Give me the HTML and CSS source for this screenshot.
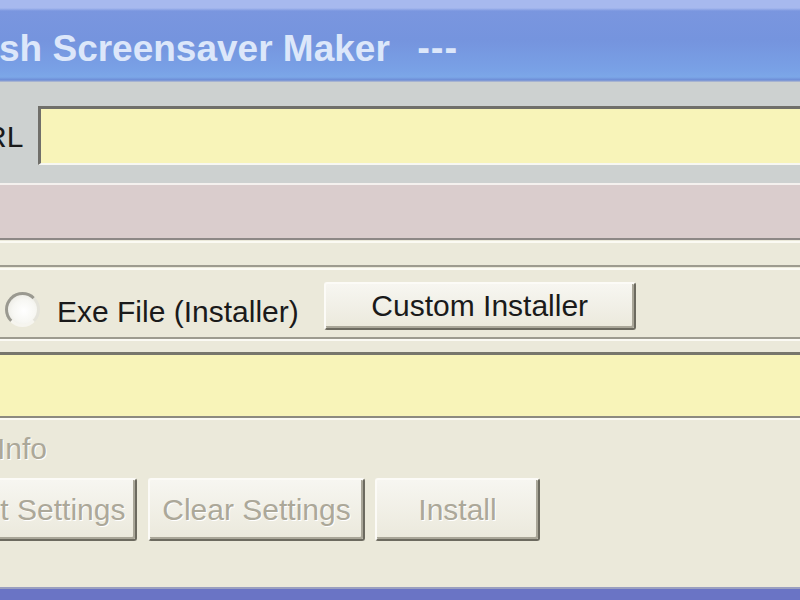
FILE: index.html
```html
<!DOCTYPE html>
<html lang="en">
<head>
    <meta charset="UTF-8">
    <meta name="viewport" content="width=device-width, initial-scale=1.0">
    <title>Flash Screensaver Maker</title>
    <link rel="stylesheet" href="styles.css">
</head>
<body>
    <div class="titlebar">
        <span class="title">sh Screensaver Maker</span>
        <span class="dashes">---</span>
    </div>

    <div class="url-area">
        <label class="url-label">RL</label>
        <div class="url-input"></div>
    </div>

    <div class="status-panel"></div>
    <div class="strip"></div>

    <div class="output-row">
        <span class="radio"></span>
        <span class="radio-label">Exe File (Installer)</span>
        <button class="btn custom-btn">Custom Installer</button>
    </div>

    <div class="path-section">
        <div class="path-field"></div>
        <div class="info-label">Info</div>
        <div class="button-row">
            <button class="btn btn-disabled first-btn">Export Settings</button>
            <button class="btn btn-disabled clear-btn">Clear Settings</button>
            <button class="btn btn-disabled install-btn">Install</button>
        </div>
    </div>

    <div class="taskbar"></div>
</body>
</html>
```

FILE: styles.css
```css
body {
    margin: 0;
    width: 800px;
    height: 600px;
    overflow: hidden;
    background-color: #ebe9da;
    font-family: "Liberation Sans", Arial, sans-serif;
    font-size: 30px;
    color: #1a1a1a;
}
.titlebar {
    height: 82px;
    box-sizing: border-box;
    padding-top: 27px;
    white-space: nowrap;
    background: linear-gradient(#a7b9ee 0, #a7b9ee 8px, #7a96df 11px, #7594de 40px, #79a1e6 70px, #7ca7e8 77px, #6d8cd6 80px, #b9c0cf 82px);
}
.title {
    display: inline-block;
    margin-left: -1px;
    font-size: 37px;
    font-weight: bold;
    line-height: 42px;
    color: #dce7fa;
}
.dashes {
    margin-left: 19px;
    font-size: 38px;
    font-weight: bold;
    line-height: 42px;
    letter-spacing: 1px;
    color: #dce7fa;
}
.url-area {
    height: 101px;
    box-sizing: border-box;
    padding-top: 24px;
    display: flex;
    align-items: flex-start;
    background-color: #cdd1d0;
}
.url-label {
    margin-left: -15px;
    width: 38px;
    line-height: 62px;
    margin-right: 15px;
}
.url-input {
    flex: 1;
    height: 59px;
    box-sizing: border-box;
    margin-right: -20px;
    background-color: #f8f4b9;
    border-top: 3px solid #706f6a;
    border-left: 3px solid #706f6a;
    border-bottom: 2px solid #f7f7f2;
}
.status-panel {
    height: 53px;
    background-color: #dacdcd;
    border-top: 2px solid #f4f1ee;
    border-bottom: 2px solid #8d8886;
}
.strip {
    height: 22px;
    margin-top: 1px;
    border-top: 2px solid #fbfaf3;
    border-bottom: 2px solid #9d9b8f;
}
.output-row {
    height: 71px;
    box-sizing: border-box;
    margin-top: 1px;
    padding-top: 12px;
    border-top: 2px solid #fbfaf4;
    border-bottom: 2px solid #9d9b8f;
    display: flex;
    align-items: flex-start;
}
.radio {
    width: 35px;
    height: 35px;
    box-sizing: border-box;
    margin: 10px 0 0 5px;
    border-radius: 50%;
    border: 3px solid;
    border-color: #9a9990 #e4e3da #f6f5ef #9a9990;
    background: radial-gradient(circle at 55% 55%, #ffffff 0, #f7f7f3 50%, #e4e3da 100%);
}
.radio-label {
    margin-left: 17px;
    margin-top: 13px;
    line-height: 34px;
}
.btn {
    font-family: "Liberation Sans", Arial, sans-serif;
    font-size: 30px;
    color: #1a1a1a;
    background: linear-gradient(#f7f6f1, #ebe9dc);
    border: 2px solid;
    border-color: #fcfbf7 #6c6a5f #6c6a5f #fcfbf7;
    border-radius: 3px;
    box-shadow: inset -2px -2px #a9a698;
    padding: 0;
}
.custom-btn {
    margin-left: 25px;
    width: 312px;
    height: 48px;
    line-height: 40px;
}
.path-section {
    border-top: 2px solid #fbfaf4;
    padding-top: 11px;
}
.path-field {
    height: 61px;
    background-color: #f8f4b9;
    border-top: 3px solid #77766c;
    border-bottom: 2px solid #8c8a80;
    box-shadow: 0 2px #fbfaf4;
}
.info-label {
    margin-top: 14px;
    margin-left: -3px;
    line-height: 34px;
    color: #aca899;
    text-shadow: 1px 1px #ffffff;
}
.button-row {
    margin-top: 12px;
    display: flex;
    gap: 11px;
    white-space: nowrap;
}
.btn-disabled {
    height: 63px;
    color: #aca899;
    text-shadow: 1px 1px #ffffff;
}
.first-btn {
    width: 217px;
    margin-left: -80px;
    text-align: right;
    padding-right: 15px;
}
.clear-btn {
    width: 217px;
}
.install-btn {
    width: 165px;
    margin-left: -1px;
}
.taskbar {
    margin-top: 46px;
    height: 13px;
    background-color: #6a74c5;
    border-top: 2px solid #9a9fbf;
}
```
